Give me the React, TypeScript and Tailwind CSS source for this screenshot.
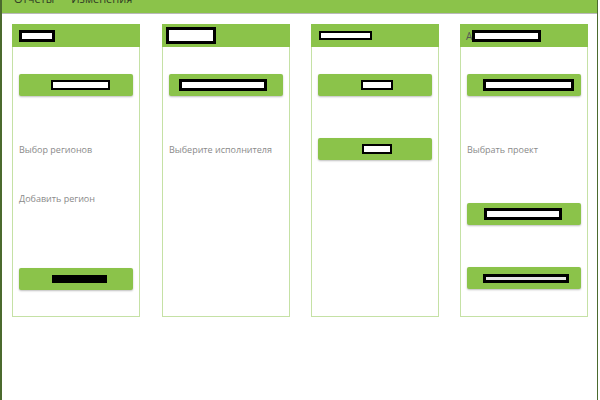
import React from 'react';

const Box = ({ w, h, b = 2, fill = 'bg-white' }: { w: number; h: number; b?: number; fill?: string }) => (
  <div className={`${fill} border-black`} style={{ width: w, height: h, borderWidth: b }} />
);

const Btn = ({ children, pl, mt }: { children: React.ReactNode; pl: number; mt: number }) => (
  <div
    className="mx-[6px] h-[22px] bg-[#8bc34a] rounded-[2px] shadow-[0_1px_2px_rgba(0,0,0,0.25)] flex items-center"
    style={{ marginTop: mt, paddingLeft: pl }}
  >
    {children}
  </div>
);

const Label = ({ children, mt }: { children: React.ReactNode; mt: number }) => (
  <div className="px-[6px] h-[12px] leading-[12px] text-[9px] text-[#8a8a8a]" style={{ marginTop: mt }}>
    {children}
  </div>
);

const Panel = ({ head, children, ml = 0 }: { head: React.ReactNode; children: React.ReactNode; ml?: number }) => (
  <div className="w-[128px] h-[293px] border border-[#c5e1a5] flex flex-col" style={{ marginLeft: ml }}>
    <div className="h-[23px] bg-[#8bc34a] flex items-center -mx-px -mt-px">{head}</div>
    {children}
  </div>
);

export default function App() {
  return (
    <div className="w-[600px] h-[400px] bg-white overflow-hidden" style={{ fontFamily: '"Open Sans", "Noto Sans", sans-serif' }}>
      <div className="w-[598px] h-[400px] border-l-2 border-r border-[#4b6a2e] flex flex-col">
        <div className="h-[13px] bg-[#8bc34a] overflow-hidden flex gap-[17px] pl-[12px] text-[11px] text-[#2f3a25] leading-[11px]">
          <span className="-mt-[7px]">Отчеты</span>
          <span className="-mt-[7px]">Изменения</span>
        </div>
        <div className="h-px bg-[#b9b9b9]" />
        <div className="flex pl-[10px] pt-[10px]">
          <Panel head={<div className="ml-[7px]"><Box w={36} h={12} b={3} /></div>}>
            <Btn pl={32} mt={27}><Box w={59} h={10} b={2} /></Btn>
            <Label mt={48}>Выбор регионов</Label>
            <Label mt={37}>Добавить регион</Label>
            <Btn pl={33} mt={63}><Box w={55} h={8} b={0} fill="bg-black" /></Btn>
          </Panel>
          <Panel ml={22} head={<div className="ml-[4px]"><Box w={50} h={17} b={3} /></div>}>
            <Btn pl={10} mt={27}><Box w={88} h={12} b={3} /></Btn>
            <Label mt={48}>Выберите исполнителя</Label>
          </Panel>
          <Panel ml={21} head={<div className="ml-[8px]"><Box w={53} h={9} b={2} /></div>}>
            <Btn pl={43} mt={27}><Box w={32} h={10} b={2} /></Btn>
            <Btn pl={44} mt={42}><Box w={30} h={10} b={2} /></Btn>
          </Panel>
          <Panel
            ml={21}
            head={
              <div className="ml-[6px] flex items-center">
                <span className="text-[10px] text-[#555] w-[6px] leading-none">А</span>
                <Box w={69} h={12} b={3} />
              </div>
            }
          >
            <Btn pl={16} mt={27}><Box w={91} h={12} b={3} /></Btn>
            <Label mt={48}>Выбрать проект</Label>
            <Btn pl={17} mt={47}><Box w={78} h={12} b={3} /></Btn>
            <Btn pl={16} mt={42}><Box w={86} h={9} b={3} fill="bg-[#e6e6e6]" /></Btn>
          </Panel>
        </div>
      </div>
    </div>
  );
}
